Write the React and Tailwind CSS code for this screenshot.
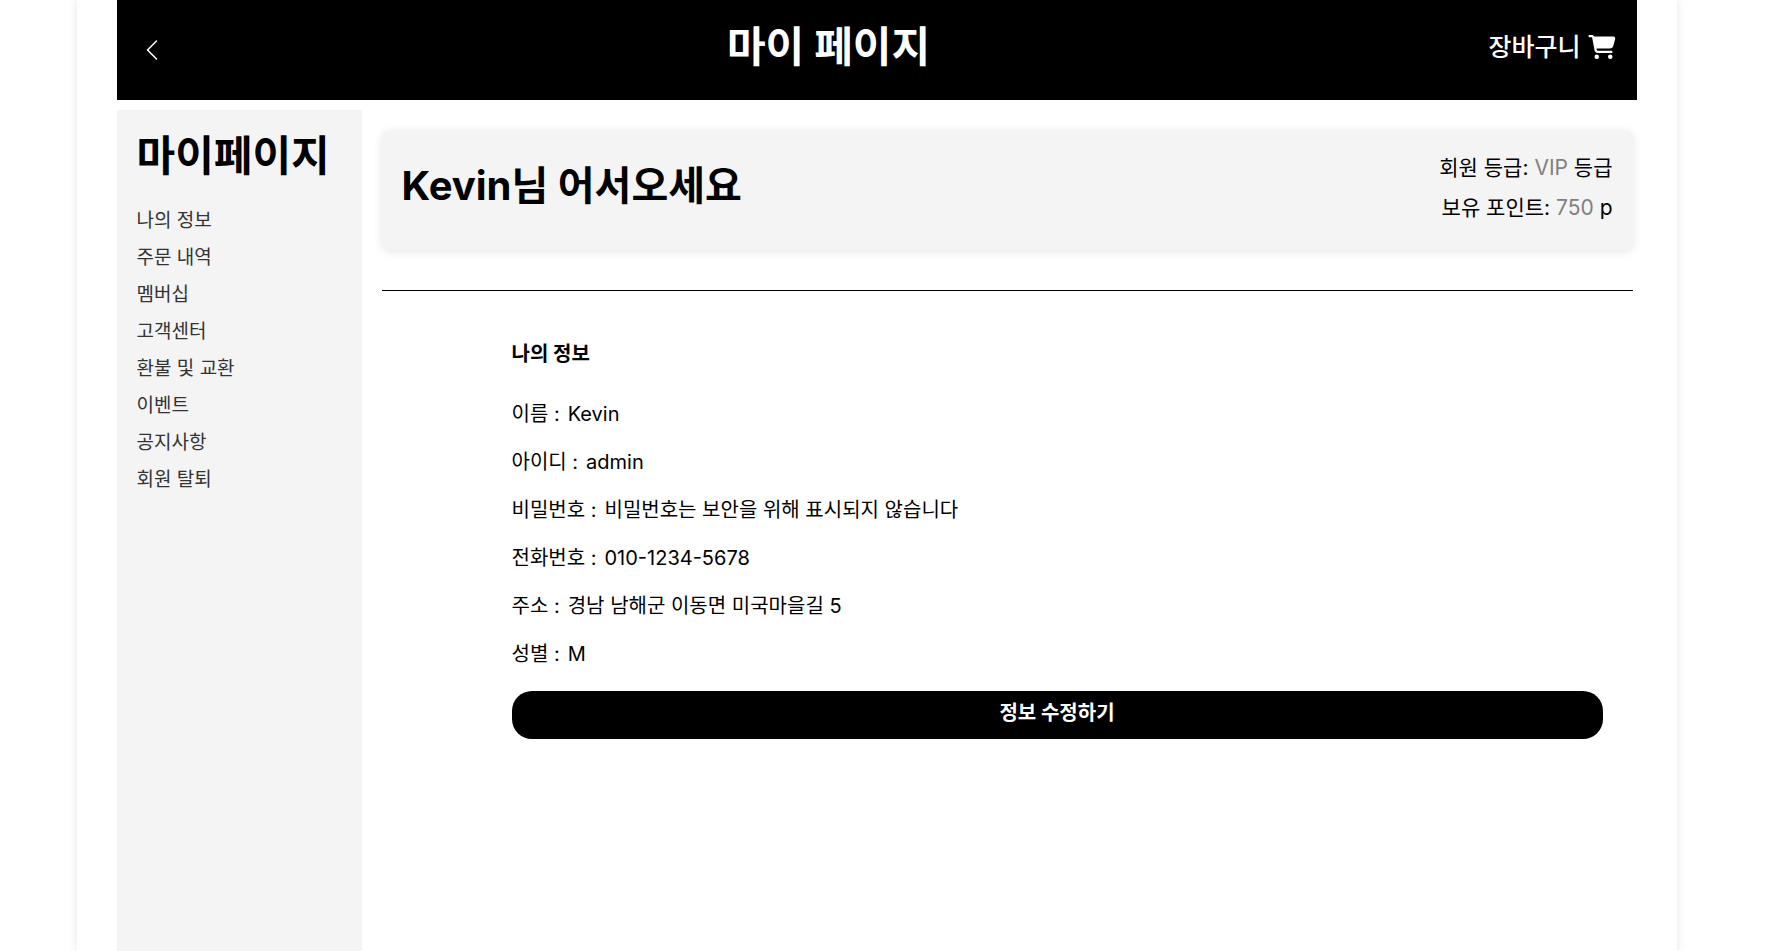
import React from "react";
import { BsChevronLeft } from "react-icons/bs";
import { FaCartShopping } from "react-icons/fa6";

const menu = [
  "나의 정보",
  "주문 내역",
  "멤버십",
  "고객센터",
  "환불 및 교환",
  "이벤트",
  "공지사항",
  "회원 탈퇴",
];

const info = [
  ["이름", "Kevin"],
  ["아이디", "admin"],
  ["비밀번호", "비밀번호는 보안을 위해 표시되지 않습니다"],
  ["전화번호", "010-1234-5678"],
  ["주소", "경남 남해군 이동면 미국마을길 5"],
  ["성별", "M"],
];

function Header() {
  return (
    <header className="flex h-[100px] items-start justify-between bg-black px-5 text-white">
      <button type="button" aria-label="뒤로 가기" className="flex h-[100px] w-8 items-center justify-start pl-[3px]">
        <BsChevronLeft className="size-6" />
      </button>
      <h1 className="pt-4 text-[42px] leading-[62px] font-bold">마이 페이지</h1>
      <a href="#cart" className="flex items-center gap-2 pt-7 text-[25px] leading-[38px] font-medium">
        장바구니
        <FaCartShopping className="h-6 w-7" />
      </a>
    </header>
  );
}

function Sidebar() {
  return (
    <aside className="w-[245px] shrink-0 bg-[#f4f4f4] p-5">
      <h2 className="pb-5 text-[42px] leading-[52px] font-bold whitespace-nowrap">마이페이지</h2>
      <nav>
        <ul>
          {menu.map((label) => (
            <li key={label}>
              <a href="#menu" className="block text-[19px] leading-[37px] text-[#333]">
                {label}
              </a>
            </li>
          ))}
        </ul>
      </nav>
    </aside>
  );
}

function WelcomeCard() {
  return (
    <section className="flex h-[120px] justify-between rounded-lg bg-[#f4f4f4] px-5 pt-[18px] shadow-[0_2px_10px_rgba(0,0,0,0.1)]">
      <h2 className="pt-1 text-[40px] leading-[68px] font-bold">Kevin님 어서오세요</h2>
      <div className="text-right text-[21px] leading-10">
        <p>
          회원 등급: <span className="text-[#808080]">VIP</span> 등급
        </p>
        <p>
          보유 포인트: <span className="text-[#808080]">750</span> p
        </p>
      </div>
    </section>
  );
}

export default function App() {
  return (
    <div className="bg-white pr-[14px] font-[Inter,'Noto_Sans_CJK_KR',sans-serif] text-black">
      <div className="mx-auto flex min-h-screen max-w-[1600px] flex-col px-10 shadow-[0_0_10px_rgba(0,0,0,0.1)]">
        <Header />
        <div className="mt-[10px] flex grow">
          <Sidebar />
          <main className="grow pt-5 pr-1 pl-5">
            <WelcomeCard />
            <hr className="mt-10 border-t border-black" />
            <section className="pt-[45px] pr-[30px] pl-[130px] text-xl">
              <h3 className="pb-[18px] leading-9 font-bold">나의 정보</h3>
              <dl>
                {info.map(([label, value]) => (
                  <div key={label} className="flex gap-2 leading-[48px]">
                    <dt>{label} :</dt>
                    <dd>{value}</dd>
                  </div>
                ))}
              </dl>
              <button type="button" className="mt-[13px] h-12 w-full rounded-[20px] bg-black pb-1 font-bold text-white">
                정보 수정하기
              </button>
            </section>
          </main>
        </div>
      </div>
    </div>
  );
}
